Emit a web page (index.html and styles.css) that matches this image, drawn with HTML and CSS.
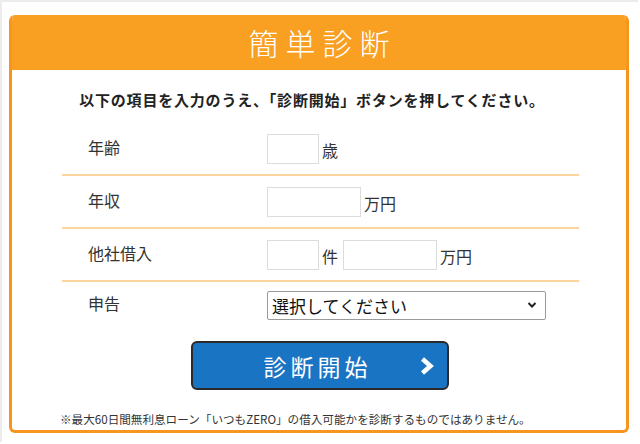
FILE: index.html
```html
<!DOCTYPE html>
<html lang="ja">
<head>
    <meta charset="utf-8">
    <title>簡単診断</title>
    <link rel="stylesheet" href="styles.css">
</head>
<body>
    <div class="page">
        <div class="card">
            <h1 class="card-title">簡単診断</h1>
            <div class="card-body">
                <p class="lead">以下の項目を入力のうえ、「診断開始」ボタンを押してください。</p>
                <div class="form">
                    <div class="row">
                        <div class="label">年齢</div>
                        <div class="field">
                            <input class="input input-s" type="text">
                            <span class="unit">歳</span>
                        </div>
                    </div>
                    <div class="row">
                        <div class="label">年収</div>
                        <div class="field">
                            <input class="input input-m" type="text">
                            <span class="unit">万円</span>
                        </div>
                    </div>
                    <div class="row">
                        <div class="label">他社借入</div>
                        <div class="field">
                            <input class="input input-s" type="text">
                            <span class="unit">件</span>
                            <input class="input input-m" type="text">
                            <span class="unit">万円</span>
                        </div>
                    </div>
                    <div class="row row-last">
                        <div class="label">申告</div>
                        <div class="field">
                            <div class="select">
                                <span>選択してください</span>
                                <svg width="10" height="8" viewBox="0 0 10 8"><polyline points="1.5,2 5,5.5 8.5,2" fill="none" stroke="#222" stroke-width="2"/></svg>
                            </div>
                        </div>
                    </div>
                </div>
                <div class="actions">
                    <button class="btn" type="button">
                        <span class="btn-text">診断開始</span>
                        <svg class="btn-icon" width="16" height="20" viewBox="0 0 16 20"><polyline points="3.5,3 11.5,10 3.5,17" fill="none" stroke="#fff" stroke-width="4.5" stroke-linejoin="miter"/></svg>
                    </button>
                </div>
                <p class="note">※最大60日間無利息ローン「いつもZERO」の借入可能かを診断するものではありません。</p>
            </div>
        </div>
    </div>
</body>
</html>
```
FILE: styles.css
```css
body {
    margin: 0;
    background: #fff;
    font-family: "Noto Sans CJK JP", "Noto Sans", sans-serif;
    color: #333;
}

.page {
    width: 638px;
    height: 442px;
    border-top: 2px solid #ececec;
    border-left: 2px solid #ececec;
    padding: 13px 0 0 7px;
    box-sizing: border-box;
}

.card {
    width: 620px;
    height: 418px;
    box-sizing: border-box;
    border: 3px solid #f7961f;
    border-top: 0;
    border-radius: 6px;
    overflow: hidden;
    background: #fff;
}

.card-title {
    margin: 0;
    height: 55px;
    background: #f99f22;
    color: #fff;
    font-size: 30px;
    font-weight: 300;
    letter-spacing: 7px;
    text-indent: 7px;
    line-height: 55px;
    text-align: center;
}

.card-body {
    padding: 19px 0 0;
}

.lead {
    margin: 0;
    padding-right: 14px;
    font-size: 15px;
    font-weight: bold;
    letter-spacing: 0.8px;
    line-height: 22px;
    text-align: center;
    color: #222;
}

.form {
    margin: 12px 47px 0 50px;
}

.row {
    display: flex;
    align-items: center;
    height: 51px;
    border-bottom: 2px solid #fcd59c;
}

.row-last {
    height: 46px;
    border-bottom: 0;
}

.label {
    width: 179px;
    padding-left: 26px;
    padding-bottom: 4px;
    font-size: 16px;
}

.field {
    display: flex;
    align-items: center;
}

.input {
    height: 30px;
    box-sizing: border-box;
    border: 1px solid #dcdcdc;
    margin: 0;
    padding: 0;
}

.input-s {
    width: 52px;
}

.input-m {
    width: 94px;
}

.unit {
    font-size: 16px;
    margin: 3px 5px 0 3px;
}

.select {
    width: 279px;
    height: 29px;
    box-sizing: border-box;
    border: 1px solid #9a9a9a;
    border-radius: 2px;
    display: flex;
    align-items: center;
    justify-content: space-between;
    padding: 0 8px 0 4px;
    font-size: 17px;
    color: #111;
}

.actions {
    display: flex;
    justify-content: center;
    margin-top: 13px;
}

.btn {
    width: 258px;
    height: 49px;
    border: 2px solid #2a2a2a;
    border-radius: 6px;
    background: #1a74c4;
    color: #fff;
    display: flex;
    align-items: center;
    position: relative;
    padding: 0;
    margin-left: 1px;
}

.btn-text {
    flex: 1;
    text-align: center;
    font-family: "Noto Sans CJK JP", sans-serif;
    font-size: 23px;
    letter-spacing: 4px;
    margin-right: 4px;
}

.btn-icon {
    position: absolute;
    right: 12px;
    top: 13px;
}

.note {
    margin: 21px 0 0 48px;
    font-size: 11.6px;
    color: #333;
}
```
